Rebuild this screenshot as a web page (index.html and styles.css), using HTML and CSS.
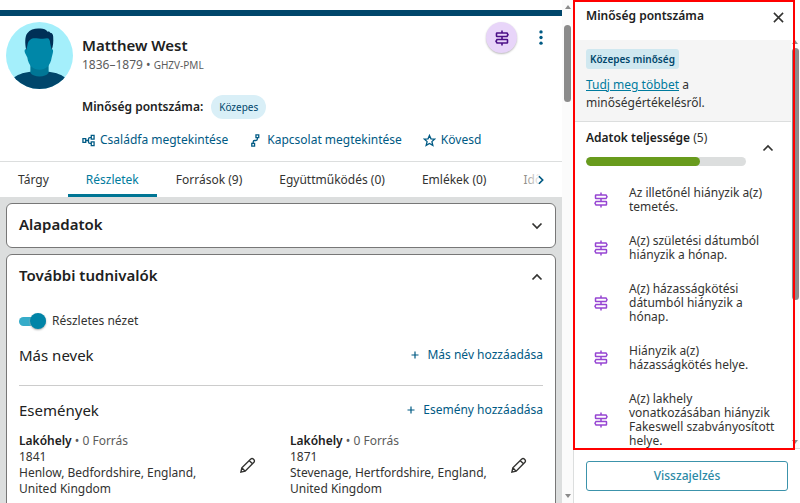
FILE: index.html
```html
<!DOCTYPE html>
<html lang="hu">
<head>
<meta charset="utf-8">
<meta name="viewport" content="width=device-width, initial-scale=1">
<title>Matthew West</title>
<link rel="stylesheet" href="styles.css">
</head>
<body>
<svg class="defs" aria-hidden="true">
  <symbol id="signpost" viewBox="0 0 14 16">
    <path d="M7 .5V3M7 6.500v3M7 13v2.500M2 3h10l1 1.750-1 1.750H2a.5.5 0 0 1-.5-.5V3.500A.5.5 0 0 1 2 3zM12 9.500H2l-1 1.750L2 13h10a.5.5 0 0 0 .5-.5V10a.5.5 0 0 0-.5-.5z"/>
  </symbol>
  <symbol id="chevron" viewBox="0 0 12 12"><path d="M1.500 3.500 6 8l4.500-4.500"/></symbol>
  <symbol id="pencil" viewBox="0 0 18 18">
    <path d="M2 16l1-4.500L12.500 2.200a1.800 1.800 0 0 1 2.600 0l.7.700a1.800 1.800 0 0 1 0 2.600L6.500 15zM11 4l3 3M3 11.500 6.500 15"/>
  </symbol>
</svg>
<div class="page">
  <main class="main">
    <div class="topbar"></div>
    <header class="person">
      <svg class="avatar" viewBox="0 0 66 66" aria-hidden="true">
        <clipPath id="round"><circle cx="33" cy="33" r="33"/></clipPath>
        <g clip-path="url(#round)">
          <rect width="66" height="66" fill="#a4effb"/>
          <path d="M6 56c5-4 10-6 18-7h18c8 1 13 3 18 7v10H6z" fill="#00466b"/>
          <path d="M24 38h18v12c-3 5-15 5-18 0z" fill="#007695"/>
          <path d="M20 27c-2-1-2 2-1 4l2 4c1 8 6 12 12 12s11-4 12-12l1-4c1-3 0-5-1-4V15H20z" fill="#0087a8"/>
          <path d="M20 28c-1.500-7-1.500-14 1-17 3-4 8-5 13-4.500 3 0 5.500 1 7 3 1-.5 2 0 2.500 1 2 0 3 2 3 4 .3 5 0 9-1.500 13L43.500 21c0-3-1-5-3-5-4 1-9 0-12 0-4 0-6 2-7 5z" fill="#003057"/>
        </g>
      </svg>
      <div class="identity">
        <h1 class="name">Matthew West</h1>
        <p class="dates">1836–1879 • <span class="pid">GHZV-PML</span></p>
        <p class="quality"><strong>Minőség pontszáma:</strong><span class="pill">Közepes</span></p>
        <nav class="actions">
          <a href="#tree"><svg viewBox="0 0 14 14" aria-hidden="true"><path d="M1 5h3v4H1zM4 7h3M10 4H8.500Q7 4 7 5.500v3Q7 10 8.500 10H10M10 1.500h3v4h-3zM10 8.500h3v4h-3z"/></svg>Családfa megtekintése</a>
          <a href="#relation"><svg viewBox="0 0 14 14" aria-hidden="true"><path d="M7.500 1h3v3h-3zM3 10h3v3H3zM9 4v1.500Q9 7 7.500 7H6Q4.500 7 4.500 8.500V10"/></svg>Kapcsolat megtekintése</a>
          <a href="#follow"><svg viewBox="0 0 14 14" aria-hidden="true"><path d="M7 1.500l1.600 3.700 4 .3-3 2.700 1 4.100L7 10.200l-3.600 2.100 1-4.100-3-2.700 4-.3z"/></svg>Kövesd</a>
        </nav>
      </div>
      <button class="badge" aria-label="Kutatási segítség"><svg aria-hidden="true"><use href="#signpost"/></svg></button>
      <button class="more" aria-label="Továbbiak"><svg viewBox="0 0 4 16" aria-hidden="true"><circle cx="2" cy="2" r="1.800"/><circle cx="2" cy="8" r="1.800"/><circle cx="2" cy="14" r="1.800"/></svg></button>
    </header>
    <nav class="tabs">
      <a href="#t1">Tárgy</a>
      <a href="#t2" class="active" aria-current="page">Részletek</a>
      <a href="#t3">Források (9)</a>
      <a href="#t4">Együttműködés (0)</a>
      <a href="#t5">Emlékek (0)</a>
      <a href="#t6">Idő</a>
      <button class="next" aria-label="Következő"><svg class="chev right" aria-hidden="true"><use href="#chevron"/></svg></button>
    </nav>
    <div class="content">
      <section class="card">
        <div class="card-head"><h2>Alapadatok</h2><button aria-label="Kinyitás"><svg class="chev" aria-hidden="true"><use href="#chevron"/></svg></button></div>
      </section>
      <section class="card">
        <div class="card-head"><h2>További tudnivalók</h2><button aria-label="Bezárás"><svg class="chev up" aria-hidden="true"><use href="#chevron"/></svg></button></div>
        <label class="toggle"><input type="checkbox" checked>Részletes nézet</label>
        <div class="group names"><h3>Más nevek</h3><a href="#add-name"><svg viewBox="0 0 8 8" aria-hidden="true"><path d="M4 .5v7M.5 4h7"/></svg>Más név hozzáadása</a></div>
        <div class="group"><h3>Események</h3><a href="#add-event"><svg viewBox="0 0 8 8" aria-hidden="true"><path d="M4 .5v7M.5 4h7"/></svg>Esemény hozzáadása</a></div>
        <div class="events">
          <article class="event">
            <div><p><strong>Lakóhely</strong> <span class="muted">• 0 Forrás</span></p><p>1841</p><p>Henlow, Bedfordshire, England, United Kingdom</p></div>
            <button aria-label="Szerkesztés"><svg aria-hidden="true"><use href="#pencil"/></svg></button>
          </article>
          <article class="event">
            <div><p><strong>Lakóhely</strong> <span class="muted">• 0 Forrás</span></p><p>1871</p><p>Stevenage, Hertfordshire, England, United Kingdom</p></div>
            <button aria-label="Szerkesztés"><svg aria-hidden="true"><use href="#pencil"/></svg></button>
          </article>
        </div>
      </section>
    </div>
  </main>
  <div class="scroll" aria-hidden="true"><i class="arrow"></i><i class="thumb"></i><i class="arrow down"></i></div>
  <aside class="panel">
    <header class="panel-head"><h2>Minőség pontszáma</h2><button aria-label="Bezárás"><svg viewBox="0 0 12 12" aria-hidden="true"><path d="M1 1l10 10M11 1 1 11"/></svg></button></header>
    <div class="panel-body">
      <div class="panel-content">
        <div class="intro"><span class="tag">Közepes minőség</span><p><a href="#more">Tudj meg többet</a> a minőségértékelésről.</p></div>
        <div class="score">
          <div class="score-main"><h3>Adatok teljessége <span>(5)</span></h3><div class="meter"><div class="fill"></div></div></div>
          <button aria-label="Összecsukás"><svg class="chev up" aria-hidden="true"><use href="#chevron"/></svg></button>
        </div>
        <ul class="issues">
          <li><svg aria-hidden="true"><use href="#signpost"/></svg><span>Az illetőnél hiányzik a(z) temetés.</span></li>
          <li><svg aria-hidden="true"><use href="#signpost"/></svg><span>A(z) születési dátumból hiányzik a hónap.</span></li>
          <li><svg aria-hidden="true"><use href="#signpost"/></svg><span>A(z) házasságkötési dátumból hiányzik a hónap.</span></li>
          <li><svg aria-hidden="true"><use href="#signpost"/></svg><span>Hiányzik a(z) házasságkötés helye.</span></li>
          <li><svg aria-hidden="true"><use href="#signpost"/></svg><span>A(z) lakhely vonatkozásában hiányzik Fakeswell szabványosított helye.</span></li>
        </ul>
      </div>
      <div class="scroll slim" aria-hidden="true"><i class="arrow"></i><i class="thumb"></i><i class="arrow down"></i></div>
    </div>
    <footer class="panel-foot"><button>Visszajelzés</button></footer>
    <div class="frame"></div>
  </aside>
</div>
</body>
</html>
```
FILE: styles.css
```css
* { box-sizing: border-box; }
body { margin: 0; background: #fff; color: #333331; font: 12px/16px "Noto Sans", sans-serif; }
h1, h2, h3, p, ul { margin: 0; padding: 0; }
h1, h2, h3, strong { color: #202121; font-weight: 600; }
button { padding: 0; border: 0; background: none; font: inherit; display: flex; align-items: center; justify-content: center; color: #333331; }
a { color: #005a84; text-decoration: none; }
svg { fill: none; stroke: currentColor; flex: none; }
.defs { position: absolute; width: 0; height: 0; }
.page { display: flex; height: 100vh; overflow: hidden; }
.main { flex: 1; min-width: 0; display: flex; flex-direction: column; overflow: hidden; }
.topbar { flex: none; height: 16px; border-top: 10px solid #fff; background: #00466b; }

.person { flex: none; display: flex; align-items: flex-start; height: 145px; padding: 6px 9px 0 6px; }
.avatar { width: 67px; height: 67px; stroke: none; }
.identity { flex: 1; padding: 13px 0 0 9px; }
.name { font-size: 15px; line-height: 20px; }
.dates { line-height: 20px; color: #5b5c5c; }
.pid { font-size: 10px; }
.quality { display: flex; align-items: center; gap: 8px; margin-top: 20px; }
.pill { padding: 4px 8px; border-radius: 12px; background: #d9eff7; color: #00466b; font-size: 10px; }
.actions { display: flex; gap: 21px; margin-top: 13px; margin-right: -80px; white-space: nowrap; }
.actions a { display: flex; align-items: center; gap: 5px; }
.actions svg { width: 13px; height: 13px; stroke-width: 1.4; }
.badge { width: 31px; height: 31px; border-radius: 50%; background: #e8d5f9; color: #4b0f87; box-shadow: 0 1px 2px #bbb; }
.badge svg { width: 14px; height: 16px; stroke-width: 1.6; }
.more { width: 24px; height: 30px; margin-left: 12px; }
.more svg { width: 4px; height: 15px; fill: #005a84; stroke: none; }

.tabs { position: relative; flex: none; display: flex; gap: 1px; height: 36px; overflow: hidden; white-space: nowrap; border-top: 1px solid #dcdede; }
.tabs a { padding: 10px 18px 6px; border-bottom: 3px solid transparent; color: #333331; }
.tabs .active { color: #007b9e; border-color: #007695; }
.next { position: absolute; inset: 0 0 0 auto; width: 50px; justify-content: flex-end; padding-right: 16px; background: linear-gradient(90deg, transparent, #fff 60%); color: #005a84; }
.chev { width: 12px; height: 12px; stroke-width: 1.7; }
.chev.up { transform: rotate(180deg); }
.chev.right { width: 10px; height: 10px; stroke-width: 2; transform: rotate(-90deg); }

.content { flex: 1; min-height: 0; display: flex; flex-direction: column; gap: 6px; padding: 6px 6px 0; background: #dcdede; }
.card { flex: none; padding: 0 12px; border: 1px solid #777; border-radius: 6px; background: #fff; }
.card-head { display: flex; align-items: center; justify-content: space-between; height: 43px; }
.card-head h2 { font-size: 15px; line-height: 20px; padding-bottom: 3px; }
.toggle { display: flex; align-items: center; gap: 6px; margin-top: 15px; }
.toggle input { appearance: none; display: flex; justify-content: flex-end; align-items: center; width: 27px; height: 9px; margin: 0; border-radius: 5px; background: #36acc9; }
.toggle input::before { content: ""; width: 16px; height: 16px; border-radius: 50%; background: #0084a7; box-shadow: 0 1px 2px #aaa; }
.group { display: flex; align-items: center; justify-content: space-between; height: 47px; }
.names { height: 57px; padding-bottom: 4px; border-bottom: 1px solid #ccc; }
.group h3 { font-size: 15px; line-height: 20px; font-weight: 400; }
.group a { display: flex; align-items: center; gap: 8px; }
.group svg { width: 8px; height: 8px; stroke-width: 1.2; }
.events { display: grid; grid-template-columns: 1fr 1fr; margin-right: -18px; }
.event { display: flex; justify-content: space-between; align-items: center; gap: 20px; padding: 0 34px 16px 0; }
.event svg { width: 17px; height: 17px; stroke-width: 1.5; }
.muted { color: #5b5c5c; }

.scroll { flex: none; width: 11px; display: flex; flex-direction: column; align-items: center; padding: 5px 0; background: #fbfbfb; }
.arrow { border: 3px solid transparent; border-top: 0; border-bottom: 4px solid #8b8b8b; }
.arrow.down { margin-top: auto; transform: rotate(180deg); }
.thumb { width: 7px; height: 77px; margin-top: 16px; border-radius: 4px; background: #8b8b8b; }

.panel { position: relative; flex: none; width: 227px; display: flex; flex-direction: column; border-left: 1px solid #dcdede; }
.panel-head { flex: none; display: flex; justify-content: space-between; height: 40px; padding: 8px 16px 0 12px; }
.panel-head h2 { font-size: 12px; }
.panel-head button { height: 18px; }
.panel-head svg { width: 11px; height: 11px; stroke-width: 1.7; }
.panel-body { flex: 1; min-height: 0; display: flex; overflow: hidden; }
.panel-content { flex: 1; min-width: 0; }
.intro { height: 82px; padding: 9px 12px 0; background: #f5f5f5; border-bottom: 1px solid #dcdede; line-height: 18px; }
.tag { display: inline-block; padding: 1px 4px; border-radius: 3px; background: #d0e8f0; color: #00466b; font-size: 10px; font-weight: 600; }
.intro p { margin-top: 7px; }
.intro a { color: #007b9e; text-decoration: underline; }
.score { display: flex; align-items: center; gap: 16px; padding: 8px 12px 0; }
.score-main { width: 160px; }
.score h3 { font-size: 12px; }
.score span { font-weight: 400; color: #333331; }
.meter { height: 9px; margin-top: 11px; border-radius: 5px; background: #dcdede; overflow: hidden; }
.fill { width: 71%; height: 100%; border-radius: 5px; background: #689b1d; }
.issues { list-style: none; padding-top: 20px; line-height: 14px; }
.issues li { display: flex; align-items: center; gap: 21px; margin-bottom: 20px; padding: 0 12px 0 20px; }
.issues svg { width: 14px; height: 16px; stroke-width: 1.5; color: #9645d2; }
.slim { width: 8px; padding: 0 0 4px; margin-right: 1px; }
.slim .thumb { height: 252px; margin-top: 4px; }
.panel-foot { flex: none; padding: 12px; border-top: 1px solid #dcdede; }
.panel-foot button { width: 100%; height: 30px; border: 1px solid #3c93ab; border-radius: 3px; color: #2b89a5; font-weight: 500; }
.frame { position: absolute; inset: 0 5px 53px -1px; border: 2px solid #f00; pointer-events: none; }
```
